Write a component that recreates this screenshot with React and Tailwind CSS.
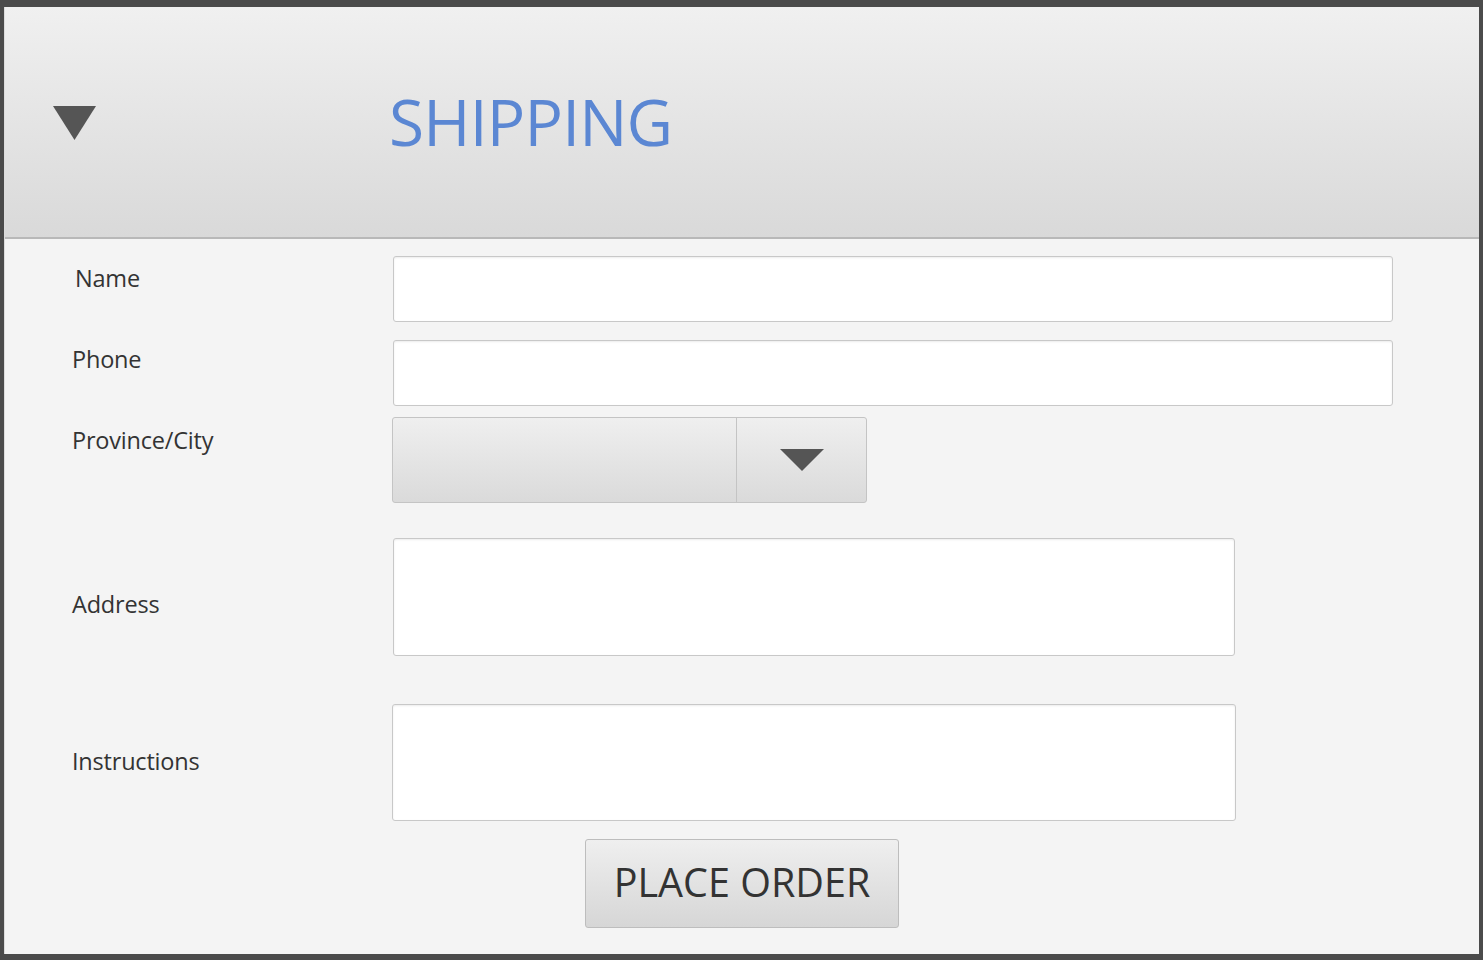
import React from "react";

const font = { fontFamily: '"Open Sans", "Noto Sans", sans-serif' };

function Label({ children, className = "" }) {
  return (
    <div className={`w-[320px] shrink-0 pl-[67px] text-[23.5px] leading-[30px] text-[#333] tracking-[-0.2px] ${className}`}>
      {children}
    </div>
  );
}

const field =
  "bg-white border border-[#c8c8c8] rounded-[3px] shadow-[inset_0_1px_2px_rgba(0,0,0,0.08)]";

export default function App() {
  return (
    <div className="w-[1483px] h-[960px] bg-[#4b4b4b] pt-[7px] pl-[4px] pr-[4px] pb-[6px]" style={font}>
      <div className="h-full bg-[#f4f4f4] border-l border-[#dcdcdc] flex flex-col">
        {/* header */}
        <div className="h-[232px] shrink-0 flex items-center bg-gradient-to-b from-[#f0f0f0] to-[#d9d9d9] border-b-2 border-[#b8b8b8]">
          <div className="w-[384px] shrink-0 pl-[48px] pt-[2px]">
            <svg width="43" height="34" viewBox="0 0 43 34">
              <polygon points="0,0 43,0 21.5,34" fill="#555" />
            </svg>
          </div>
          <div className="text-[64px] leading-none text-[#5b87d3] tracking-[-0.8px] mt-[0px]">SHIPPING</div>
        </div>

        {/* form */}
        <div className="flex flex-col pt-[17px]">
          <div className="flex">
            <Label className="mt-[7px] pl-[70px]">Name</Label>
            <div className={`${field} ml-[68px] w-[1000px] h-[66px]`} />
          </div>

          <div className="flex mt-[18px]">
            <Label className="mt-[4px]">Phone</Label>
            <div className={`${field} ml-[68px] w-[1000px] h-[66px]`} />
          </div>

          <div className="flex mt-[11px]">
            <Label className="mt-[8px]">Province/City</Label>
            <div className="ml-[67px] w-[475px] h-[86px] flex border border-[#c4c4c4] rounded-[3px] bg-gradient-to-b from-[#efefef] to-[#dadada]">
              <div className="flex-1 border-r border-[#c4c4c4]" />
              <div className="w-[129px] flex items-center justify-center">
                <svg width="44" height="22" viewBox="0 0 44 22">
                  <polygon points="0,0 44,0 22,22" fill="#555" />
                </svg>
              </div>
            </div>
          </div>

          <div className="flex mt-[35px] items-center">
            <Label className="mt-[13px]">Address</Label>
            <div className={`${field} ml-[68px] w-[842px] h-[118px]`} />
          </div>

          <div className="flex mt-[48px] items-center">
            <Label className="-mt-[4px]">Instructions</Label>
            <div className={`${field} ml-[67px] w-[844px] h-[117px]`} />
          </div>

          <div className="flex mt-[18px]">
            <button className="ml-[580px] w-[314px] h-[89px] border border-[#bdbdbd] rounded-[3px] bg-gradient-to-b from-[#efefef] to-[#d6d6d6] text-[39.5px] text-[#333] leading-none pb-[2px]">
              PLACE ORDER
            </button>
          </div>
        </div>
      </div>
    </div>
  );
}
